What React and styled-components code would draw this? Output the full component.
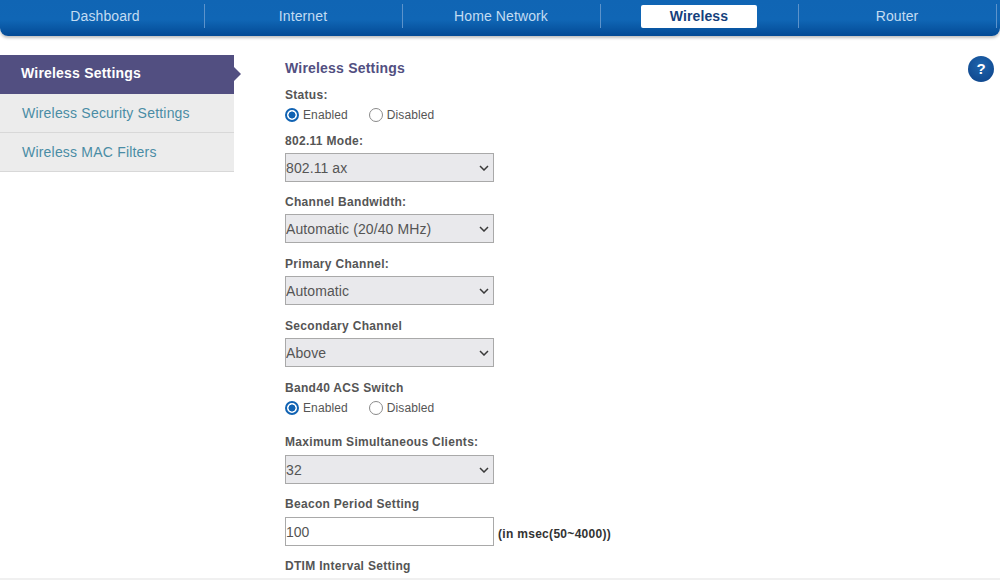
import React from 'react';
import styled, { createGlobalStyle } from 'styled-components';

const navItems = ['Dashboard', 'Internet', 'Home Network', 'Wireless', 'Router'];
const sideItems = ['Wireless Settings', 'Wireless Security Settings', 'Wireless MAC Filters'];

function Radios({ name }) {
  return (
    <RadioRow>
      <RadioLabel>
        <Radio type="radio" name={name} defaultChecked />
        Enabled
      </RadioLabel>
      <RadioLabel>
        <Radio type="radio" name={name} />
        Disabled
      </RadioLabel>
    </RadioRow>
  );
}

function Dropdown({ value }) {
  return (
    <SelectWrap>
      <Select defaultValue={value}>
        <option>{value}</option>
      </Select>
      <Chevron viewBox="0 0 10 6">
        <path d="M1 1 L5 5 L9 1" fill="none" stroke="#3a3a3a" strokeWidth="1.5" />
      </Chevron>
    </SelectWrap>
  );
}

export default function App() {
  return (
    <Page>
      <GlobalStyle />
      <Nav>
        {navItems.map((item) => (
          <NavItem key={item}>
            <NavLabel $active={item === 'Wireless'}>{item}</NavLabel>
          </NavItem>
        ))}
      </Nav>
      <Body>
        <Sidebar>
          {sideItems.map((item, i) => (
            <SideItem key={item} $active={i === 0}>{item}</SideItem>
          ))}
        </Sidebar>
        <Main>
          <Title>Wireless Settings</Title>
          <Label $gap={6}>Status:</Label>
          <Radios name="status" />
          <Label $top={12}>802.11 Mode:</Label>
          <Dropdown value="802.11 ax" />
          <Label $top={13}>Channel Bandwidth:</Label>
          <Dropdown value="Automatic (20/40 MHz)" />
          <Label $top={14}>Primary Channel:</Label>
          <Dropdown value="Automatic" />
          <Label $top={14}>Secondary Channel</Label>
          <Dropdown value="Above" />
          <Label $top={14} $gap={6}>Band40 ACS Switch</Label>
          <Radios name="acs" />
          <Label $top={20} $gap={6}>Maximum Simultaneous Clients:</Label>
          <Dropdown value="32" />
          <Label $top={13} $gap={6}>Beacon Period Setting</Label>
          <InputRow>
            <TextInput defaultValue="100" />
            <Hint>(in msec(50~4000))</Hint>
          </InputRow>
          <Label $top={13}>DTIM Interval Setting</Label>
        </Main>
        <Help>?</Help>
      </Body>
    </Page>
  );
}

const GlobalStyle = createGlobalStyle`
  html, body {
    margin: 0;
    padding: 0;
    height: 100%;
    background: #fff;
    overflow: hidden;
  }
`;

const Page = styled.div`
  width: 1000px;
  height: 580px;
  overflow: hidden;
  font-family: "Liberation Sans", Arial, sans-serif;
  border-bottom: 2px solid #f0f0f0;
  box-sizing: border-box;
`;

const Nav = styled.div`
  display: flex;
  height: 36px;
  padding-left: 7px;
  box-sizing: border-box;
  background: linear-gradient(#1065b4 0%, #1066b5 55%, #034a95 100%);
  border-radius: 0 0 8px 8px;
  box-shadow: 0 2px 3px rgba(0, 0, 0, 0.25);
`;

const NavItem = styled.div`
  width: 198px;
  height: 24px;
  margin-top: 4px;
  display: flex;
  align-items: center;
  justify-content: center;
  border-right: 1px solid #5c93cb;
  box-sizing: border-box;
`;

const NavLabel = styled.div`
  width: 116px;
  height: 23px;
  line-height: 23px;
  padding-left: 1px;
  box-sizing: border-box;
  text-align: center;
  border-radius: 2px;
  font-size: 14px;
  letter-spacing: 0.1px;
  white-space: nowrap;
  margin-right: 2px;
  color: ${(p) => (p.$active ? '#153f7c' : '#c3dcf2')};
  background: ${(p) => (p.$active ? '#fff' : 'transparent')};
  font-weight: ${(p) => (p.$active ? 700 : 400)};
`;

const Body = styled.div`
  display: flex;
  align-items: flex-start;
  padding-top: 19px;
`;

const Sidebar = styled.div`
  width: 234px;
  flex-shrink: 0;
`;

const SideItem = styled.div`
  position: relative;
  height: 39px;
  line-height: ${(p) => (p.$active ? 37 : 38)}px;
  padding-left: ${(p) => (p.$active ? 21 : 22)}px;
  box-sizing: border-box;
  font-size: 14px;
  letter-spacing: 0.2px;
  font-weight: ${(p) => (p.$active ? 700 : 400)};
  color: ${(p) => (p.$active ? '#fff' : '#4a8ca5')};
  background: ${(p) => (p.$active ? '#524f81' : '#ececec')};
  border-bottom: 1px solid ${(p) => (p.$active ? '#524f81' : '#d8d8d8')};

  ${(p) =>
    p.$active &&
    `&::after {
      content: '';
      position: absolute;
      left: 100%;
      top: 12px;
      border-left: 7px solid #524f81;
      border-top: 7px solid transparent;
      border-bottom: 7px solid transparent;
    }`}
`;

const Main = styled.div`
  margin-left: 51px;
  width: 400px;
  flex-shrink: 0;
`;

const Title = styled.div`
  font-size: 14px;
  font-weight: 700;
  line-height: 16px;
  margin: 5px 0 12px;
  color: #524f81;
  letter-spacing: 0.2px;
`;

const Label = styled.div`
  font-size: 12px;
  font-weight: 700;
  line-height: 14px;
  color: #555;
  letter-spacing: 0.3px;
  margin-top: ${(p) => p.$top || 0}px;
  margin-bottom: ${(p) => p.$gap || 5}px;
`;

const RadioRow = styled.div`
  display: flex;
  height: 14px;
  gap: 21px;
  align-items: center;
`;

const RadioLabel = styled.label`
  display: flex;
  align-items: center;
  gap: 4px;
  font-size: 12px;
  color: #555;
  letter-spacing: 0.1px;
`;

const Radio = styled.input`
  appearance: none;
  box-sizing: border-box;
  width: 14px;
  height: 14px;
  margin: 0;
  border: 1.5px solid #8a8a8a;
  border-radius: 50%;
  background: #fff;

  &:checked {
    border: 2px solid #1163b3;
    background: radial-gradient(circle, #1163b3 0 3.2px, #fff 3.8px);
  }
`;

const SelectWrap = styled.div`
  position: relative;
  width: 209px;
  height: 29px;
`;

const Select = styled.select`
  display: block;
  appearance: none;
  width: 100%;
  height: 100%;
  padding: 0;
  border: 1px solid #a9a9a9;
  border-radius: 0;
  background-color: #e9e9ec;
  font-family: inherit;
  font-size: 14px;
  letter-spacing: 0.1px;
  color: #555;
`;

const Chevron = styled.svg`
  position: absolute;
  right: 5px;
  top: 12px;
  width: 10px;
  height: 6px;
  pointer-events: none;
`;

const InputRow = styled.div`
  display: flex;
  align-items: center;
  gap: 4px;
`;

const TextInput = styled.input`
  width: 209px;
  height: 29px;
  box-sizing: border-box;
  padding: 0;
  border: 1px solid #a9a9a9;
  font-family: inherit;
  font-size: 14px;
  color: #555;
`;

const Hint = styled.span`
  font-size: 12px;
  font-weight: 700;
  letter-spacing: 0.3px;
  color: #333;
  margin-top: 4px;
`;

const Help = styled.div`
  width: 26px;
  height: 26px;
  margin: 1px 6px 0 auto;
  border-radius: 50%;
  flex-shrink: 0;
  text-align: center;
  line-height: 26px;
  font-size: 15px;
  font-weight: 700;
  color: #fff;
  background: radial-gradient(circle at 50% 35%, #1f65ad, #0d4288);
`;
